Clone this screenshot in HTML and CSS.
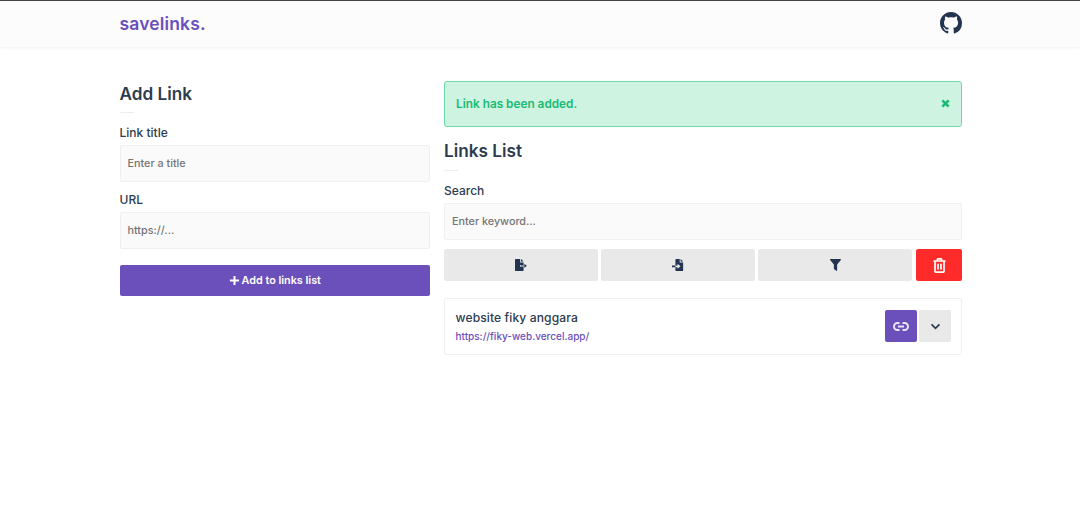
FILE: index.html
```html
<!DOCTYPE html>
<html lang="en">
<head>
<meta charset="utf-8">
<title>savelinks.</title>
<link rel="stylesheet" href="styles.css">
</head>
<body>
<header class="navbar">
  <div class="container nav-inner">
    <a class="brand">savelinks.</a>
    <svg class="gh" viewBox="0 0 16 16"><path fill-rule="evenodd" d="M8 0C3.58 0 0 3.58 0 8c0 3.54 2.29 6.53 5.47 7.59.4.07.55-.17.55-.38 0-.19-.01-.82-.01-1.49-2.01.37-2.53-.49-2.69-.94-.09-.23-.48-.94-.82-1.13-.28-.15-.68-.52-.01-.53.63-.01 1.08.58 1.23.82.72 1.21 1.87.87 2.33.66.07-.52.28-.87.51-1.07-1.78-.2-3.64-.89-3.64-3.95 0-.87.31-1.59.82-2.15-.08-.2-.36-1.02.08-2.12 0 0 .67-.21 2.2.82.64-.18 1.32-.27 2-.27.68 0 1.36.09 2 .27 1.53-1.04 2.2-.82 2.2-.82.44 1.1.16 1.92.08 2.12.51.56.82 1.27.82 2.15 0 3.07-1.87 3.75-3.65 3.95.29.25.54.73.54 1.48 0 1.07-.01 1.93-.01 2.2 0 .21.15.46.55.38A8.013 8.013 0 0016 8c0-4.42-3.58-8-8-8z"/></svg>
  </div>
</header>
<main class="container columns">
  <section class="col-left">
    <h2 class="heading">Add Link</h2>
    <div class="rule"></div>
    <div class="field">
      <label class="label">Link title</label>
      <div class="input">Enter a title</div>
    </div>
    <div class="field">
      <label class="label">URL</label>
      <div class="input">https://...</div>
    </div>
    <button class="btn btn-primary btn-add">
      <svg class="ic-plus" viewBox="0 0 12 12"><path d="M6 1v10M1 6h10"/></svg>Add to links list
    </button>
  </section>
  <section class="col-right">
    <div class="alert">
      <span>Link has been added.</span>
      <svg class="ic-x" viewBox="0 0 10 10"><path d="M1.500 1.500l7 7M8.500 1.500l-7 7"/></svg>
    </div>
    <h2 class="heading">Links List</h2>
    <div class="rule"></div>
    <div class="field">
      <label class="label">Search</label>
      <div class="input">Enter keyword...</div>
    </div>
    <div class="toolbar">
      <button class="btn btn-grey">
        <svg class="ic" viewBox="0 0 14 14"><path d="M1 0h5v4h4v3H6v2h4v4a1 1 0 0 1-1 1H1a1 1 0 0 1-1-1V1a1 1 0 0 1 1-1zM7 0l3 3H7zM7 7.500h4V5.600L13.800 8 11 10.400V8.500H7z"/></svg>
      </button>
      <button class="btn btn-grey">
        <svg class="ic" viewBox="0 0 14 14"><path d="M5 0h4v4h4v9a1 1 0 0 1-1 1H5a1 1 0 0 1-1-1V9.500h2.500v1.900L10 8.500 6.500 5.600v1.900H4V1a1 1 0 0 1 1-1zM10 0l3 3h-3zM0 7.500h4v2H0z"/></svg>
      </button>
      <button class="btn btn-grey">
        <svg class="ic-filter" viewBox="0 0 12 13"><path d="M.6 0h10.800c.5 0 .8.600.4 1L7.800 6v6.300c0 .5-.5.800-.9.500L4.600 11a.6.600 0 0 1-.4-.5V6L.2 1C-.2.600.1 0 .6 0z"/></svg>
      </button>
      <button class="btn btn-danger">
        <svg class="ic-trash" viewBox="0 0 13 15"><path d="M.5 3h12M4.300 3V1.800A1 1 0 0 1 5.300.8h2.400a1 1 0 0 1 1 1V3M2 3v10.200a1 1 0 0 0 1 1h7a1 1 0 0 0 1-1V3M5 5.800v5.800M8 5.800v5.800"/></svg>
      </button>
    </div>
    <article class="card">
      <div class="card-text">
        <div class="card-title">website fiky anggara</div>
        <a class="card-url">https://fiky-web.vercel.app/</a>
      </div>
      <div class="card-actions">
        <button class="btn btn-primary btn-square">
          <svg class="ic-link" viewBox="0 0 16 9"><path d="M6.500 1H4.500a3.500 3.500 0 0 0 0 7h2M9.500 1h2a3.500 3.500 0 0 1 0 7h-2M5 4.500h6"/></svg>
        </button>
        <button class="btn btn-grey btn-square">
          <svg class="ic-chev" viewBox="0 0 12 8"><path d="M1.500 1.500L6 6l4.500-4.500"/></svg>
        </button>
      </div>
    </article>
  </section>
</main>
</body>
</html>
```
FILE: styles.css
```css
* { box-sizing: border-box; }
html, body { margin: 0; padding: 0; }
body {
  background: #fff;
  color: #2d3b4e;
  font-family: Inter, "Open Sans", sans-serif;
  font-size: 12px;
}
.container { width: 842.500px; margin: 0 auto 0 119.500px; }
.navbar {
  height: 47px;
  border-top: 1px solid #444;
  background: #fcfcfc;
  box-shadow: 0 1px 3px rgba(0, 0, 0, .06);
}
.nav-inner { height: 46px; display: flex; align-items: center; justify-content: space-between; }
.brand { color: #6b4fbb; font-size: 17.500px; font-weight: 600; letter-spacing: .15px; margin-top: -1px; }
.gh { width: 22px; height: 22px; fill: #22344f; margin-top: -2px; }
.columns { display: flex; gap: 14px; padding-top: 34px; align-items: flex-start; }
.col-left { width: 310.500px; }
.col-right { width: 518px; }
.heading { margin: 0; font-size: 17.200px; line-height: 24px; font-weight: 600; color: #2d3b4e; }
.col-left .heading { margin-top: 1px; }
.col-right .heading { margin-top: 12px; }
.rule { width: 14px; height: 1px; background: #eee; margin: 6px 0 12px; }
.col-right .rule { margin-top: 7px; }
.field { margin-bottom: 10px; }
.col-right .field { margin-bottom: 9px; }
.label { display: block; font-size: 12px; line-height: 16px; font-weight: 500; margin-bottom: 4px; color: #2d3b4e; }
.input {
  height: 37px;
  background: #fafafa;
  border: 1px solid #f0f0f0;
  border-radius: 2px;
  padding: 0 7px;
  display: flex;
  align-items: center;
  font-size: 10.800px;
  font-weight: 500;
  color: #757575;
}
.btn { border: 0; border-radius: 2px; display: flex; align-items: center; justify-content: center; font-family: inherit; padding: 0; }
.btn-primary { background: #6b4fbb; color: #fff; }
.btn-grey { background: #e9e9e9; }
.btn-danger { background: #ff2b2b; }
.btn-add { width: 100%; height: 31px; margin-top: 16px; font-size: 10.800px; font-weight: 600; gap: 2px; }
.ic-plus { width: 11px; height: 11px; fill: none; stroke: #fff; stroke-width: 2.200; }
.alert {
  height: 46px;
  background: #cff3e1;
  border: 1px solid #6cd9a8;
  border-radius: 3px;
  padding: 0 11px;
  display: flex;
  align-items: center;
  justify-content: space-between;
  color: #17bb75;
  font-size: 11.800px;
  font-weight: 600;
}
.ic-x { width: 9px; height: 9px; fill: none; stroke: #17bb75; stroke-width: 2.800; margin-top: -1px; }
.toolbar { display: flex; gap: 3px; }
.toolbar .btn { height: 32px; width: 154px; }
.toolbar .btn-danger { width: 46px; margin-left: 1px; }
.ic { width: 12px; height: 12px; fill: #22344f; }
.ic-filter { width: 11px; height: 12px; fill: #22344f; }
.ic-trash { width: 13px; height: 15px; fill: none; stroke: #fff; stroke-width: 1.700; }
.card {
  height: 57px;
  margin-top: 17px;
  border: 1px solid #f0f0f0;
  border-radius: 2px;
  padding: 0 10px 0 10.500px;
  display: flex;
  align-items: center;
  justify-content: space-between;
}
.card-title { font-size: 12.100px; line-height: 16px; font-weight: 500; color: #2d3b4e; letter-spacing: .1px; }
.card-url { display: block; color: #6b4fbb; font-size: 10px; line-height: 14px; margin-top: 3px; font-weight: 500; }
.card-actions { display: flex; gap: 2px; margin-top: -1px; }
.btn-square { width: 32px; height: 32px; }
.ic-link { width: 16px; height: 9px; fill: none; stroke: #e9e4f7; stroke-width: 2; }
.ic-chev { width: 11px; height: 7px; fill: none; stroke: #2d3b4e; stroke-width: 2; }
```
